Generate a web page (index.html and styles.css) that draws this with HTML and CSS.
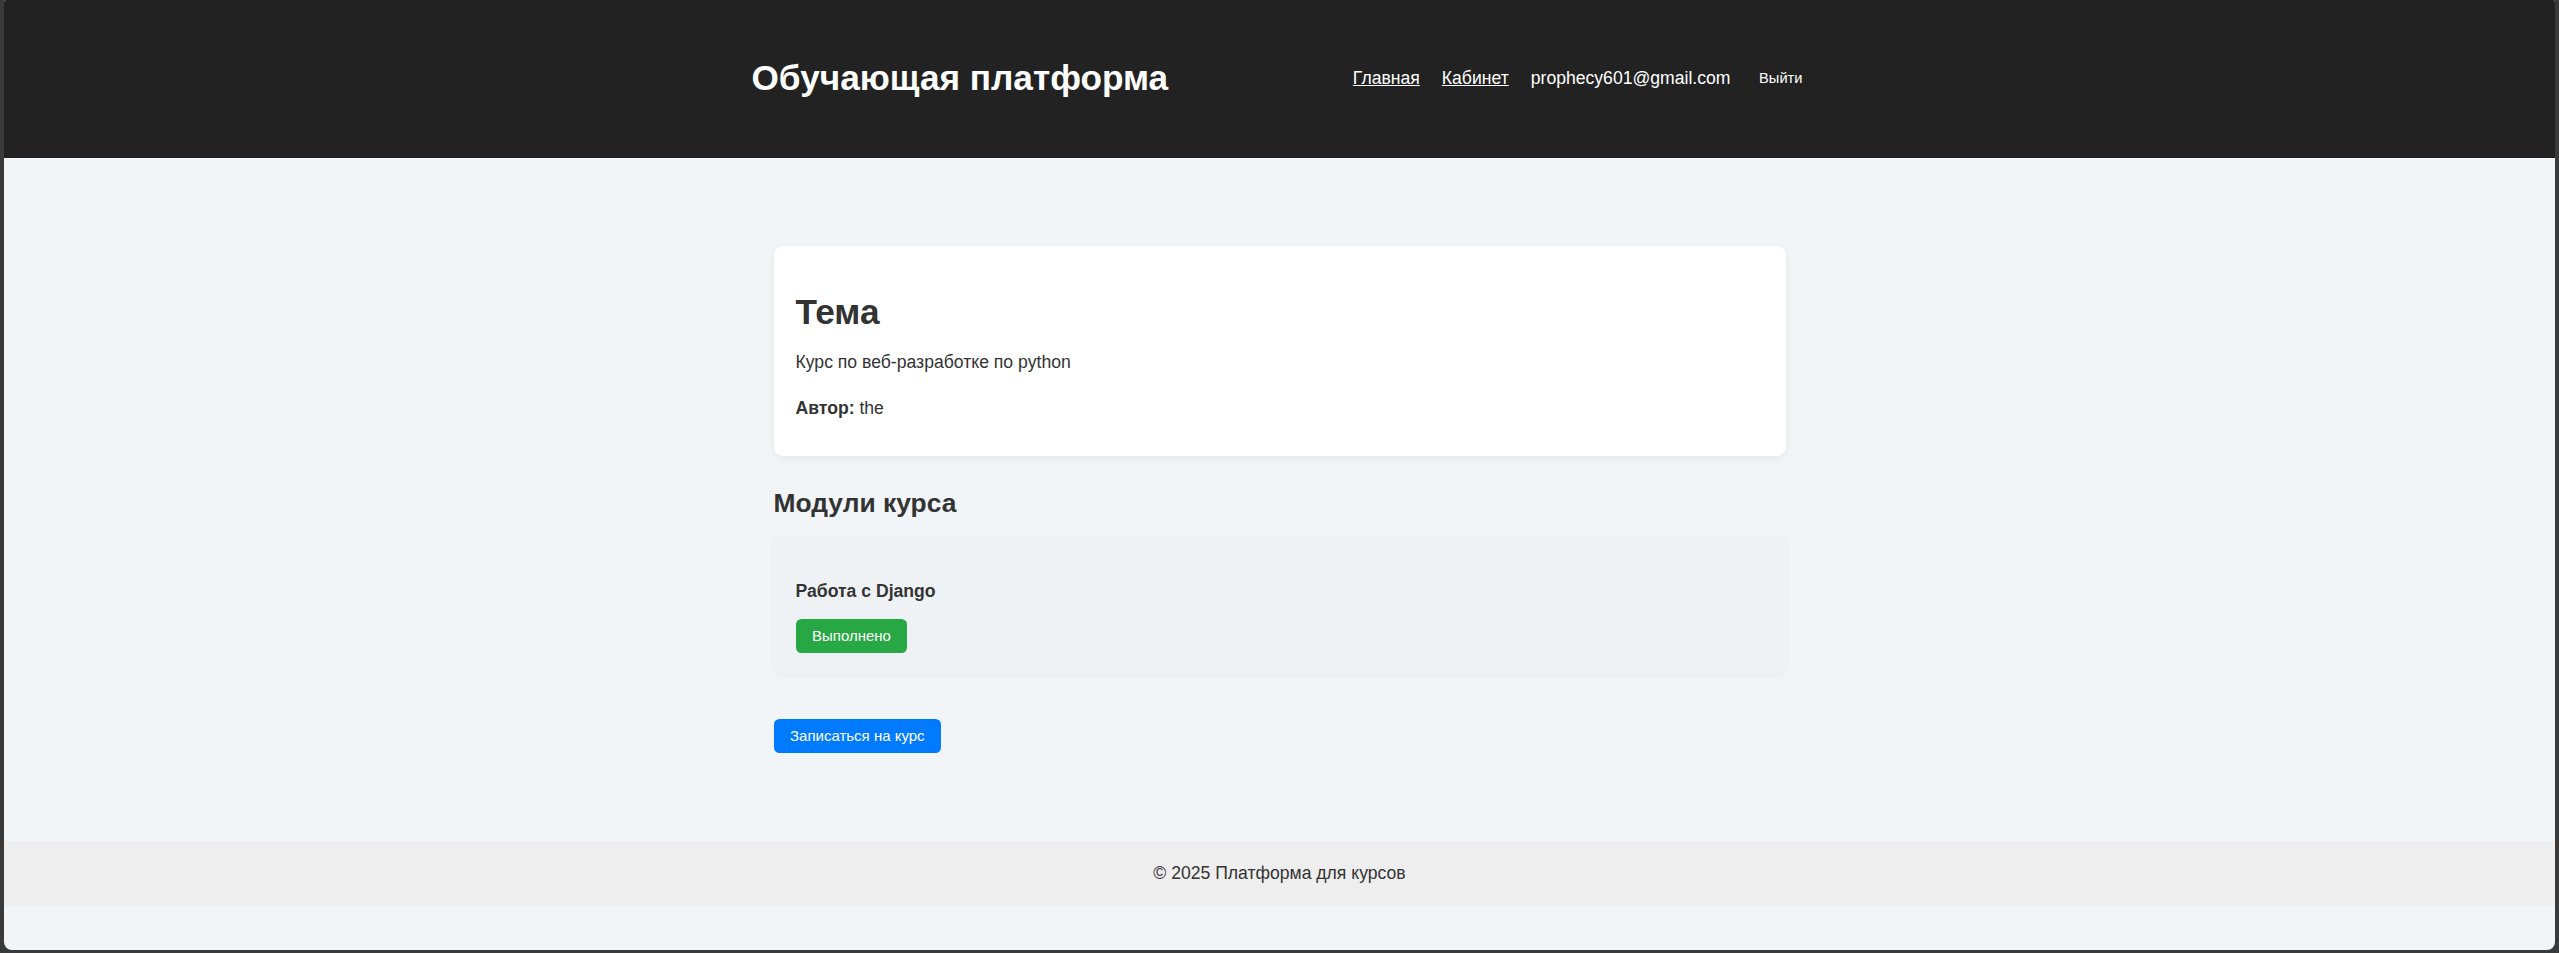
FILE: index.html
```html
<!DOCTYPE html>
<html lang="ru">
<head>
<meta charset="utf-8">
<title>Обучающая платформа</title>
<link rel="stylesheet" href="styles.css">
</head>
<body>
<div class="window">
  <header class="site-header">
    <div class="header-inner">
      <h1 class="logo">Обучающая платформа</h1>
      <nav class="nav">
        <a href="#" class="nav-link">Главная</a>
        <a href="#" class="nav-link">Кабинет</a>
        <span class="nav-user">prophecy601@gmail.com</span>
        <button class="nav-logout" type="button">Выйти</button>
      </nav>
    </div>
  </header>

  <main class="container">
    <section class="card">
      <h1 class="card-title">Тема</h1>
      <p class="card-text">Курс по веб-разработке по python</p>
      <p class="card-text card-author"><strong>Автор:</strong> the</p>
    </section>

    <h2 class="section-title">Модули курса</h2>

    <div class="module">
      <h3 class="module-title">Работа с Django</h3>
      <button class="btn btn-success" type="button">Выполнено</button>
    </div>

    <button class="btn btn-primary enroll" type="button">Записаться на курс</button>
  </main>

  <footer class="site-footer">© 2025 Платформа для курсов</footer>
</div>
</body>
</html>
```

FILE: styles.css
```css
html, body {
  margin: 0;
  padding: 0;
}

body {
  background: #3a3a3a;
  padding: 0 4px 3px 4px;
  font-family: "Liberation Sans", Arial, sans-serif;
  color: #333;
  line-height: 1.6;
}

.window {
  height: 950px;
  background: #f1f5f8;
  border-radius: 2px 2px 8px 8px;
  overflow: hidden;
  display: flex;
  flex-direction: column;
}

/* Header */
.site-header {
  background: #222;
  height: 158px;
  box-sizing: border-box;
  padding-bottom: 3px;
  display: flex;
  align-items: center;
  flex-shrink: 0;
}

.header-inner {
  width: 1056px;
  margin: 0 auto;
  display: flex;
  align-items: center;
  justify-content: space-between;
}

.logo {
  margin: 0;
  font-size: 35.2px;
  line-height: 40px;
  font-weight: bold;
  color: #fff;
}

.nav {
  display: flex;
  align-items: center;
  gap: 22px;
  font-size: 17.6px;
  line-height: 20px;
}

.nav-link {
  color: #fff;
  text-decoration: underline;
}

.nav-user {
  color: #fff;
}

.nav-logout {
  background: transparent;
  border: none;
  color: #fff;
  font-family: "Liberation Sans", Arial, sans-serif;
  font-size: 14.67px;
  line-height: 18px;
  padding: 1px 5px 1px 6.6px;
  cursor: pointer;
}

/* Main */
.container {
  width: 1056px;
  box-sizing: border-box;
  margin: 0 auto;
  padding: 88px 22px 88px;
  display: flex;
  flex-direction: column;
  align-items: flex-start;
}

.card {
  align-self: stretch;
  background: #fff;
  border-radius: 9px;
  padding: 22px 22px 22px;
  box-shadow: 0 2px 8px rgba(0, 0, 0, 0.06);
}

.card-title {
  margin: 23px 0 15px;
  font-size: 35.2px;
  line-height: 42px;
  font-weight: bold;
  color: #333;
}

.card-text {
  margin: 0 0 17.6px;
  font-size: 17.6px;
  line-height: 28px;
}

.card-author {
  margin-bottom: 12.4px;
}

.section-title {
  margin: 31.7px 0 16.6px;
  font-size: 26.4px;
  line-height: 31.7px;
  font-weight: bold;
  color: #333;
}

.module {
  align-self: stretch;
  background: #eef2f5;
  border-radius: 9px;
  padding: 22px 22px 21px;
  box-shadow: 0 2px 6px rgba(0, 0, 0, 0.05);
  display: flex;
  flex-direction: column;
  align-items: flex-start;
}

.module-title {
  margin: 23px 0 17px;
  font-size: 17.6px;
  line-height: 21px;
  font-weight: bold;
  color: #333;
}

.btn {
  display: block;
  border: none;
  border-radius: 5.5px;
  color: #fff;
  font-family: "Liberation Sans", Arial, sans-serif;
  font-size: 15px;
  line-height: 18px;
  padding: 8px 16.5px;
  height: 34px;
  box-sizing: border-box;
  cursor: pointer;
}

.btn-success {
  background: #28a745;
}

.btn-primary {
  background: #007bff;
}

.enroll {
  margin-top: 45px;
}

/* Footer */
.site-footer {
  flex-shrink: 0;
  background: #eeeeee;
  height: 65px;
  box-sizing: border-box;
  padding: 18.4px 0;
  text-align: center;
  font-size: 17.6px;
  line-height: 28px;
  color: #333;
}
```
